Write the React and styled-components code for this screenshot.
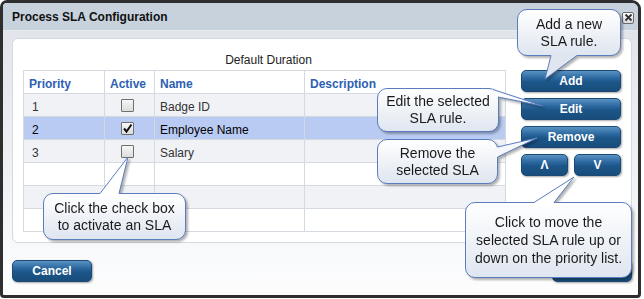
import React from 'react';
import styled, { createGlobalStyle } from 'styled-components';

const FONT = '"Liberation Sans", Arial, sans-serif';
const LINE = '#5b7dbd';

const GlobalStyle = createGlobalStyle`
  html, body {
    margin: 0;
    padding: 0;
    background: #ffffff;
    font-family: ${FONT};
  }
`;

const rows = [
  { priority: '1', active: false, name: 'Badge ID' },
  { priority: '2', active: true, name: 'Employee Name', selected: true },
  { priority: '3', active: false, name: 'Salary' },
  {},
  {},
  {},
];

const callouts = [
  {
    key: 'add',
    left: 517, top: 9, width: 104, height: 47, lh: 17,
    text: ['Add a new', 'SLA rule.'],
    tail: { a: [34, 46.5], b: [60, 46.5], tip: [28, 70], dir: [0, -3], fill: '#dfe6f0' },
  },
  {
    key: 'edit',
    left: 377, top: 88, width: 122, height: 44, lh: 17,
    text: ['Edit the selected', 'SLA rule.'],
    tail: { a: [116, 1.5], b: [121, 9], tip: [166, 18], dir: [-4, 2], fill: '#fbfcfd' },
  },
  {
    key: 'remove',
    left: 377, top: 139, width: 121, height: 45, lh: 17,
    text: ['Remove the', 'selected SLA'],
    tail: { a: [120.5, 8], b: [120.5, 18], tip: [160, -1], dir: [-3, 0], fill: '#f5f7fa' },
  },
  {
    key: 'check',
    left: 43, top: 193, width: 143, height: 47, lh: 17,
    text: ['Click the check box', 'to activate an SLA'],
    tail: { a: [57, 0.5], b: [76, 0.5], tip: [85, -36], dir: [0, 3], fill: '#ffffff' },
  },
  {
    key: 'move',
    left: 465, top: 202, width: 167, height: 76, lh: 18,
    text: ['Click to move the', 'selected SLA rule up or', 'down on the priority list.'],
    tail: { a: [69, 0.5], b: [89, 0.5], tip: [109, -25], dir: [0, 3], fill: '#ffffff' },
  },
];

function Checkbox({ checked }) {
  return (
    <Box>
      {checked && (
        <svg width="11" height="11" viewBox="0 0 11 11">
          <path d="M2 5.5 L4.5 8.5 L9.5 1.5" fill="none" stroke="#111" strokeWidth="2" />
        </svg>
      )}
    </Box>
  );
}

function Callout({ left, top, width, height, lh, text, tail }) {
  const pt = p => `${p[0]},${p[1]}`;
  const inner = p => [p[0] + tail.dir[0], p[1] + tail.dir[1]];
  const cover = [inner(tail.a), tail.a, tail.tip, tail.b, inner(tail.b)].map(pt).join(' ');

  return (
    <Bubble $left={left} $top={top} $width={width} $height={height} $lh={lh}>
      <TailSvg>
        <polygon points={cover} fill={tail.fill} />
        <polyline
          points={`${pt(tail.a)} ${pt(tail.tip)} ${pt(tail.b)}`}
          fill="none"
          stroke={LINE}
          strokeWidth="1"
        />
      </TailSvg>
      <BubbleText>
        {text.map(line => (
          <div key={line}>{line}</div>
        ))}
      </BubbleText>
    </Bubble>
  );
}

export default function App() {
  return (
    <Stage>
      <GlobalStyle />
      <Window>
        <TitleBar>
          <Title>Process SLA Configuration</Title>
          <CloseButton>
            <svg width="9" height="9" viewBox="0 0 9 9">
              <path d="M1.5 1.5 L7.5 7.5 M7.5 1.5 L1.5 7.5" stroke="#333" strokeWidth="1.8" />
            </svg>
          </CloseButton>
        </TitleBar>
        <Body>
          <Panel>
            <TableArea>
              <Caption>Default Duration</Caption>
              <Grid>
                <HeadCell>Priority</HeadCell>
                <HeadCell>Active</HeadCell>
                <HeadCell>Name</HeadCell>
                <HeadCell>Description</HeadCell>
                {rows.map((row, i) => {
                  const bg = row.selected ? 'selected' : i % 2 === 0 ? 'alt' : 'plain';
                  return (
                    <React.Fragment key={i}>
                      <Cell $bg={bg} $pad={8}>{row.priority}</Cell>
                      <Cell $bg={bg} $center>
                        {row.priority && <Checkbox checked={row.active} />}
                      </Cell>
                      <Cell $bg={bg}>{row.name}</Cell>
                      <Cell $bg={bg} />
                    </React.Fragment>
                  );
                })}
              </Grid>
            </TableArea>
            <Actions>
              <Button>Add</Button>
              <Button>Edit</Button>
              <Button>Remove</Button>
              <ArrowRow>
                <Button $w={47}>Λ</Button>
                <Button $w={47}>V</Button>
              </ArrowRow>
            </Actions>
          </Panel>
          <Footer>
            <Button $w={80}>Cancel</Button>
            <Button $w={80} aria-label="Save" />
          </Footer>
        </Body>
      </Window>
      {callouts.map(({ key, ...c }) => (
        <Callout key={key} {...c} />
      ))}
    </Stage>
  );
}

const Stage = styled.div`
  position: relative;
  width: 644px;
  height: 299px;
  overflow: hidden;
`;

const Window = styled.div`
  box-sizing: border-box;
  width: 641px;
  height: 298px;
  border: 3px solid #2e2e2e;
  border-radius: 7px 9px 4px 4px;
  display: flex;
  flex-direction: column;
  overflow: hidden;
  background: linear-gradient(#dfe3e9 0%, #eef1f4 55%, #fdfdfe 100%);
`;

const TitleBar = styled.div`
  height: 27px;
  flex: none;
  display: flex;
  align-items: center;
  justify-content: space-between;
  padding: 0 4px 0 9px;
  background: #c7d2dd;
  border-bottom: 1px solid #e6ebf0;
`;

const Title = styled.div`
  font: bold 12px ${FONT};
  color: #111;
`;

const CloseButton = styled.div`
  box-sizing: border-box;
  width: 12px;
  height: 12px;
  margin-top: 2px;
  border: 1px solid #6d6d6d;
  border-radius: 2px;
  background: linear-gradient(#ffffff, #d9d9d9);
  display: flex;
  align-items: center;
  justify-content: center;
`;

const Body = styled.div`
  flex: 1;
  display: flex;
  flex-direction: column;
  padding: 7px 6px 0 9px;
`;

const Panel = styled.div`
  box-sizing: border-box;
  width: 620px;
  height: 205px;
  display: flex;
  gap: 15px;
  padding: 0 10px;
  background: #ffffff;
  border: 1px solid #d3d9e0;
  border-radius: 6px;
`;

const TableArea = styled.div`
  width: 483px;
  display: flex;
  flex-direction: column;
  padding-top: 13px;
`;

const Caption = styled.div`
  font: 12px/16px ${FONT};
  color: #222;
  text-align: center;
  padding-left: 8px;
  margin-bottom: 2px;
`;

const Grid = styled.div`
  display: grid;
  grid-template-columns: 81px 50px 150px 201px;
  grid-auto-rows: 23px;
  border-left: 1px solid #d5dae1;
  border-top: 1px solid #d5dae1;
`;

const rowBg = {
  selected: '#bacbf3',
  alt: '#f0f2f6',
  plain: '#ffffff',
};

const Cell = styled.div`
  box-sizing: border-box;
  display: flex;
  align-items: center;
  justify-content: ${p => (p.$center ? 'center' : 'flex-start')};
  padding: ${p => (p.$center ? '1px 4px 0 0' : `3px 0 0 ${p.$pad || 5}px`)};
  border-right: 1px solid #d5dae1;
  border-bottom: 1px solid #d5dae1;
  background: ${p => rowBg[p.$bg]};
  font: 12px ${FONT};
  color: ${p => (p.$bg === 'selected' ? '#000' : '#333')};
  white-space: nowrap;
`;

const HeadCell = styled(Cell)`
  padding-left: 5px;
  font-weight: bold;
  color: #2d5fb3;
  background: #ffffff;
`;

const Box = styled.span`
  box-sizing: border-box;
  width: 13px;
  height: 13px;
  border: 1px solid #6f6f6f;
  border-radius: 1px;
  background: linear-gradient(#f7f7f7, #dcdcdc);
  display: flex;
  align-items: center;
  justify-content: center;
`;

const Actions = styled.div`
  width: 100px;
  display: flex;
  flex-direction: column;
  gap: 6px;
  padding-top: 31px;
`;

const ArrowRow = styled.div`
  display: flex;
  gap: 6px;
`;

const Button = styled.button`
  box-sizing: border-box;
  width: ${p => p.$w || 100}px;
  height: 22px;
  padding: 0;
  border: 1px solid #1c4a74;
  border-radius: 5px;
  background: linear-gradient(#5a93c4 0%, #2c69a0 35%, #1c5688 55%, #174d7c 100%);
  box-shadow: 1px 1px 2px rgba(0, 0, 0, 0.35);
  font: bold 12px ${FONT};
  color: #ffffff;
`;

const Footer = styled.div`
  width: 620px;
  display: flex;
  justify-content: space-between;
  margin-top: 17px;
`;

const Bubble = styled.div`
  position: absolute;
  left: ${p => p.$left}px;
  top: ${p => p.$top}px;
  width: ${p => p.$width}px;
  height: ${p => p.$height}px;
  box-sizing: border-box;
  border: 1px solid ${LINE};
  border-radius: 10px;
  background: linear-gradient(#ffffff, #dfe6f0);
  filter: drop-shadow(2px 2px 1px rgba(0, 0, 0, 0.3));
  display: flex;
  align-items: center;
  justify-content: center;
  font: 14px/${p => p.$lh}px ${FONT};
  color: #1a1a1a;
  text-align: center;
  z-index: 5;
`;

const BubbleText = styled.div`
  position: relative;
`;

const TailSvg = styled.svg`
  position: absolute;
  left: -1px;
  top: -1px;
  width: 1px;
  height: 1px;
  overflow: visible;
`;
